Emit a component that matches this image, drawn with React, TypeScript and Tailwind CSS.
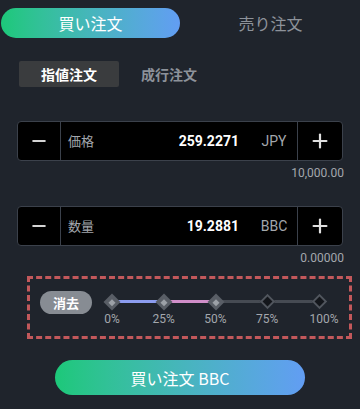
import React from 'react';
import { Minus, Plus } from 'lucide-react';

const font = { fontFamily: '"Noto Sans CJK JP", Roboto, "Liberation Sans", sans-serif' };
const latin = { fontFamily: 'Roboto, "Liberation Sans", sans-serif' };

const steps = ['0%', '25%', '50%', '75%', '100%'];

const NumberBox = ({ label, value, unit }: { label: string; value: string; unit: string }) => (
  <div className="mx-[17px] flex h-10 rounded-[4px] border border-[#3b414b] bg-black">
    <div className="flex w-[43px] items-center justify-center border-r border-[#3b414b]">
      <Minus size={20} strokeWidth={2.4} className="text-[#d4d4d4]" />
    </div>
    <div className="flex flex-1 items-center">
      <span className="pl-[7px] text-[13px] text-[#a3a7ad]">{label}</span>
      <span className="flex-1 pr-[12px] text-right text-[14px] font-bold text-white" style={latin}>
        {value}
      </span>
      <span className="w-[46px] text-center text-[14px] text-[#a3a7ad]" style={latin}>
        {unit}
      </span>
    </div>
    <div className="flex w-[45px] items-center justify-center border-l border-[#3b414b]">
      <Plus size={22} strokeWidth={2.4} className="text-[#e0e0e0]" />
    </div>
  </div>
);

const Note = ({ text }: { text: string }) => (
  <div className="mt-[4px] pr-[16px] text-right text-[12px] leading-[16px] text-[#a3a7ad]" style={latin}>
    {text}
  </div>
);

export default function App() {
  return (
    <div className="h-[409px] w-[360px] overflow-hidden bg-[#1f242c]" style={font}>
      {/* Buy / sell tabs */}
      <div className="flex pt-2">
        <div className="flex-1 px-[1px]">
          <div className="flex h-[30px] items-center justify-center rounded-full bg-gradient-to-r from-[#1cc879] to-[#629df3] text-[16px] text-white">
            買い注文
          </div>
        </div>
        <div className="flex h-[30px] flex-1 items-center justify-center text-[16px] text-[#8d929a]">
          売り注文
        </div>
      </div>

      {/* Order type */}
      <div className="ml-[19px] mt-[23px] flex">
        <div className="flex h-[26px] w-[100px] items-center justify-center rounded-[2px] bg-[#3a3c3e] text-[14px] font-bold text-white">
          指値注文
        </div>
        <div className="flex h-[26px] w-[100px] items-center justify-center text-[14px] font-bold text-[#8d929a]">
          成行注文
        </div>
      </div>

      <div className="mt-[34px]">
        <NumberBox label="価格" value="259.2271" unit="JPY" />
        <Note text="10,000.00" />
      </div>

      <div className="mt-[25px]">
        <NumberBox label="数量" value="19.2881" unit="BBC" />
        <Note text="0.00000" />
      </div>

      {/* Percentage slider */}
      <div className="ml-[27px] mt-[10px] flex h-[63px] w-[325px] border-[3px] border-dashed border-[#c2585b] pl-[10px] pt-[12px]">
        <div className="flex h-[23px] w-[52px] items-center justify-center rounded-full bg-[#878c93] text-[13px] font-bold text-white">
          消去
        </div>
        <div className="relative ml-[12px] mt-[2px] w-[223px]">
          <div className="absolute left-[8px] right-[8px] top-[7px] flex h-[3px]">
            <div className="w-1/4 bg-[#8b9cef]" />
            <div className="w-1/4 bg-[#d08ec9]" />
            <div className="w-1/2 bg-[#464b53]" />
          </div>
          <div className="relative flex justify-between">
            {steps.map((s, i) => (
              <div key={s} className="flex w-4 flex-col items-center">
                <div className="flex h-[17px] items-center justify-center">
                  {i < 3 ? (
                    <div className="flex h-3 w-3 rotate-45 items-center justify-center bg-[#595e66]">
                      <div className="h-[5px] w-[5px] bg-[#9ca1a7]" />
                    </div>
                  ) : (
                    <div className="h-[11px] w-[11px] rotate-45 border-2 border-[#50555d] bg-[#13161b]" />
                  )}
                </div>
                <span
                  className={`mt-[2px] whitespace-nowrap text-[12px] leading-[14px] text-[#a3a7ad] ${i === 4 ? 'translate-x-[5px]' : ''}`}
                  style={latin}
                >
                  {s}
                </span>
              </div>
            ))}
          </div>
        </div>
      </div>

      {/* Submit */}
      <div className="mt-[21px] flex justify-center">
        <div className="flex h-[35px] w-[250px] items-center justify-center rounded-full bg-gradient-to-r from-[#1cc879] to-[#629df3] text-[16px] text-white">
          買い注文 BBC
        </div>
      </div>
    </div>
  );
}
